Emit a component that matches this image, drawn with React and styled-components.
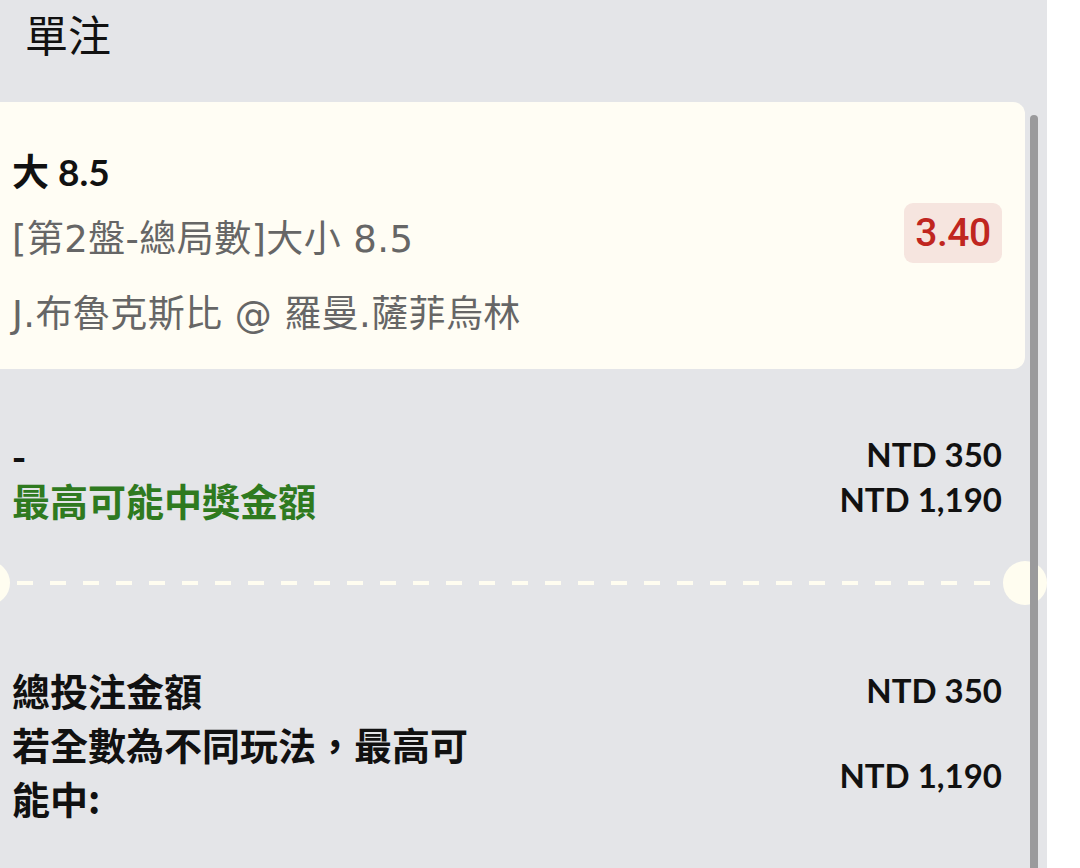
import styled, { createGlobalStyle } from 'styled-components';

const GlobalStyle = createGlobalStyle`
    body {
        margin: 0;
        overflow: hidden;
        font-family: Lato, "Noto Sans CJK TC", sans-serif;
    }
`;

const Screen = styled.div`
    display: flex;
    height: 868px;
    overflow: hidden;
`;

const Panel = styled.div`
    position: relative;
    width: 1047px;
    flex-shrink: 0;
    background: #e4e5e8;
    overflow: hidden;
`;

const Side = styled.div`
    flex: 1;
    background: #ffffff;
`;

const ScrollThumb = styled.div`
    position: absolute;
    left: 1030px;
    top: 115px;
    bottom: -10px;
    width: 8px;
    border-radius: 4px;
    background: #9a9a9c;
`;

const Title = styled.h1`
    margin: 0;
    height: 102px;
    box-sizing: border-box;
    padding: 9px 0 0 25px;
    font-family: "Noto Sans CJK TC", sans-serif;
    font-size: 43px;
    line-height: 48px;
    font-weight: 400;
    color: #111;
`;

const Body = styled.div`
    margin-left: -12px;
    width: 1037px;
    display: flex;
    flex-direction: column;
`;

const Card = styled.div`
    display: flex;
    align-items: center;
    justify-content: space-between;
    height: 267px;
    box-sizing: border-box;
    padding: 0 23px 0 24px;
    background: #fffdf4;
    border-radius: 12px;
`;

const Selection = styled.div`
    display: flex;
    flex-direction: column;
    padding-top: 18px;
`;

const Pick = styled.div`
    font-size: 37px;
    line-height: 50px;
    font-weight: 700;
    color: #111;
    margin-bottom: 16px;
`;

const Info = styled.div`
    font-family: "DejaVu Sans", "Noto Sans CJK TC", sans-serif;
    font-size: 37px;
    line-height: 54px;
    letter-spacing: 0.4px;
    color: #666;
    margin-top: ${p => p.$gap || 0}px;
`;

const Odds = styled.div`
    display: flex;
    align-items: center;
    justify-content: center;
    width: 98px;
    height: 60px;
    margin-top: -6px;
    border-radius: 9px;
    background: #f6e5df;
    color: #c0261f;
    font-family: Roboto, sans-serif;
    font-size: 39px;
    font-weight: 500;
    letter-spacing: -0.5px;
`;

const Section = styled.div`
    display: flex;
    flex-direction: column;
    padding: ${p => p.$pad};
    padding-left: 24px;
    padding-right: 23px;
`;

const Row = styled.div`
    display: flex;
    align-items: center;
    justify-content: space-between;
    line-height: ${p => p.$lh || 45}px;
`;

const Label = styled.div`
    max-width: 480px;
    font-family: "Noto Sans CJK TC", sans-serif;
    font-size: 38px;
    font-weight: 700;
    color: ${p => p.$green ? '#2f7a1f' : '#111'};
`;

const Amount = styled.div`
    margin-top: ${p => p.$shift || 0}px;
    font-family: Lato, sans-serif;
    font-size: 33px;
    font-weight: 700;
    color: #111;
    white-space: nowrap;
`;

const Divider = styled.div`
    display: flex;
    align-items: center;
    height: 44px;
    margin: 39px -22px 0;
`;

const Notch = styled.div`
    width: 44px;
    height: 44px;
    border-radius: 50%;
    background: #fffdf0;
    flex-shrink: 0;
`;

const Dashes = styled.div`
    flex: 1;
    height: 4px;
    margin: 0 6px 0 7px;
    background: repeating-linear-gradient(
        to right,
        #fffdf0 0 16px,
        transparent 16px 33px
    );
`;

export default function App() {
    return (
        <Screen>
            <GlobalStyle />
            <Panel>
                <Title>單注</Title>
                <Body>
                    <Card>
                        <Selection>
                            <Pick>大 8.5</Pick>
                            <Info>[第2盤-總局數]大小 8.5</Info>
                            <Info $gap={21}>J.布魯克斯比 @ 羅曼.薩菲烏林</Info>
                        </Selection>
                        <Odds>3.40</Odds>
                    </Card>
                    <Section $pad="63px 0 0">
                        <Row>
                            <Label>-</Label>
                            <Amount>NTD 350</Amount>
                        </Row>
                        <Row>
                            <Label $green>最高可能中獎金額</Label>
                            <Amount>NTD 1,190</Amount>
                        </Row>
                    </Section>
                    <Divider>
                        <Notch />
                        <Dashes />
                        <Notch />
                    </Divider>
                    <Section $pad="58px 0 0">
                        <Row $lh={54}>
                            <Label>總投注金額</Label>
                            <Amount>NTD 350</Amount>
                        </Row>
                        <Row $lh={54}>
                            <Label>若全數為不同玩法，最高可能中:</Label>
                            <Amount $shift={8}>NTD 1,190</Amount>
                        </Row>
                    </Section>
                </Body>
                <ScrollThumb />
            </Panel>
            <Side />
        </Screen>
    );
}
